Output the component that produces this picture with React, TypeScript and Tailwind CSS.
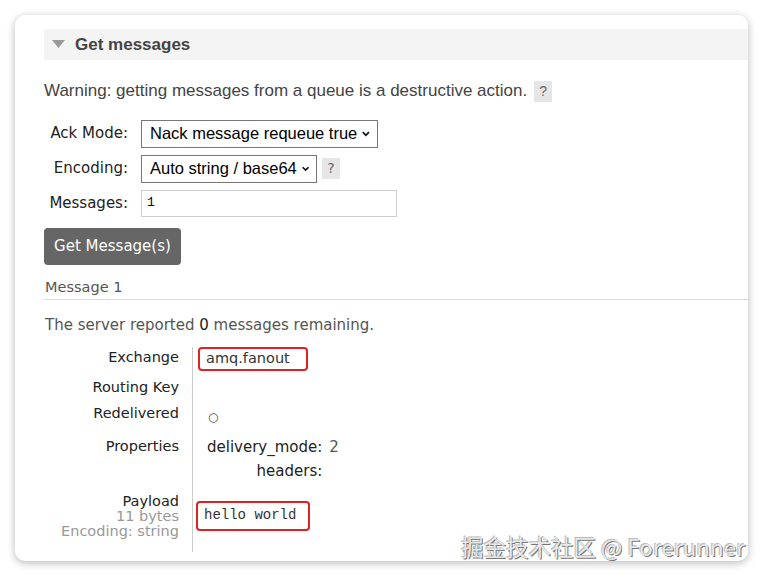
import React from "react";

const sans = { fontFamily: '"DejaVu Sans", Verdana, sans-serif' };
const arial = { fontFamily: '"Liberation Sans", Arial, sans-serif' };

function Chevron() {
  return (
    <svg width="11" height="11" viewBox="0 0 11 11" className="ml-1">
      <path d="M2 4 L5.5 7.5 L9 4" fill="none" stroke="#111" strokeWidth="2" />
    </svg>
  );
}

function Help() {
  return (
    <span className="inline-flex h-[21px] w-[18px] items-center justify-center bg-[#e6e6e6] text-[14px] text-[#666]">
      ?
    </span>
  );
}

function FakeSelect({ label, width }: { label: string; width: string }) {
  return (
    <div
      className={`flex h-[28px] items-center border border-[#767676] bg-white pl-2 pr-1.5 text-[16.5px] text-black ${width}`}
      style={arial}
    >
      <span className="whitespace-nowrap">{label}</span>
      <Chevron />
    </div>
  );
}

export default function App() {
  return (
    <div className="h-[578px] w-[762px] overflow-hidden bg-white p-[15px] pr-[14px]" style={sans}>
      <div className="relative h-[546px] w-[733px] overflow-hidden rounded-[10px] bg-white pl-[29px] pt-[14px] shadow-[0_2px_8px_rgba(0,0,0,0.28)]">
        {/* section header */}
        <div className="flex h-[31px] items-center bg-[#f4f4f4] pl-2">
          <svg width="13" height="9" viewBox="0 0 13 9">
            <path d="M0 0 H13 L6.5 8 Z" fill="#9a9a9a" />
          </svg>
          <span className="ml-[10px] text-[17px] font-bold text-[#444]" style={arial}>
            Get messages
          </span>
        </div>

        <div className="mt-[18px] flex items-center text-[17px] text-[#444]" style={arial}>
          <span>Warning: getting messages from a queue is a destructive action.</span>
          <span className="ml-[7px]">
            <Help />
          </span>
        </div>

        <div className="mt-[16px] flex flex-col gap-[7px] text-[15px] text-[#222]">
          <div className="flex items-center">
            <span className="w-[84px] text-right">Ack Mode:</span>
            <div className="ml-[13px]">
              <FakeSelect label="Nack message requeue true" width="w-[237px]" />
            </div>
          </div>
          <div className="flex items-center">
            <span className="w-[84px] text-right">Encoding:</span>
            <div className="ml-[13px]">
              <FakeSelect label="Auto string / base64" width="w-[176px]" />
            </div>
            <span className="ml-[5px]">
              <Help />
            </span>
          </div>
          <div className="flex items-center">
            <span className="w-[84px] text-right">Messages:</span>
            <div
              className="ml-[13px] flex h-[27px] w-[256px] items-center border border-[#cfcfcf] pl-[5px] text-[13px] text-black"
              style={{ fontFamily: '"Liberation Mono", monospace' }}
            >
              1
            </div>
          </div>
        </div>

        <button className="mt-[11px] h-[37px] w-[137px] rounded-[4px] bg-[#666] text-[15px] text-white">
          Get Message(s)
        </button>

        <div className="mt-[12px] border-b border-[#ddd] pb-[2px] pl-px text-[14.5px] leading-[20px] text-[#555]">
          Message 1
        </div>

        <div className="mt-[15px] pl-px text-[15px] leading-[20px] text-[#555]">
          The server reported <span className="text-[#222]">0</span> messages remaining.
        </div>

        <div className="mt-[12px] flex text-[14.5px] text-[#222]">
          <div className="w-[135px] text-right leading-[18px]">
            <div className="pt-px">Exchange</div>
            <div className="mt-[12px]">Routing Key</div>
            <div className="mt-[8px]">Redelivered</div>
            <div className="mt-[15px]">Properties</div>
            <div className="mt-[37px]">Payload</div>
            <div className="-mt-[1px] leading-[15px] text-[#999]">11 bytes</div>
            <div className="leading-[14px] text-[#999]">Encoding: string</div>
          </div>
          <div className="ml-[13px] h-[205px] border-l border-[#ccc]" />
          <div className="flex flex-col pl-[5px]">
            <div className="flex h-[24px] w-[110px] items-center rounded-[4px] border-2 border-[#d22] pl-[6px] text-[#333]">
              amq.fanout
            </div>
            <div className="h-[37px]" />
            <div className="pl-[10px] text-[12px] leading-[18px] text-[#444]">○</div>
            <div className="mt-[12px] grid grid-cols-[auto_auto] justify-start gap-x-[7px] gap-y-[6px] pl-[9px] text-[15px] leading-[18px]">
              <span className="text-right">delivery_mode:</span>
              <span className="text-[#555]">2</span>
              <span className="text-right">headers:</span>
              <span />
            </div>
            <div
              className="-ml-[2px] mt-[21px] flex h-[30px] w-[114px] items-center rounded-[4px] border-2 border-[#d22] pl-[6px] text-[14px] text-[#333]"
              style={{ fontFamily: '"Liberation Mono", "Noto Sans CJK SC", monospace' }}
            >
              hello world
            </div>
          </div>
        </div>

        <span
          className="absolute bottom-[2px] right-[3px] whitespace-nowrap text-[22.5px] leading-[26px] text-[#e8e8e8] [text-shadow:1px_1px_0_#777,-1px_-1px_0_#bbb]"
          style={{ fontFamily: '"Noto Sans CJK SC", "Noto Sans", sans-serif' }}
        >
          掘金技术社区 @ Forerunner
        </span>
      </div>
    </div>
  );
}
